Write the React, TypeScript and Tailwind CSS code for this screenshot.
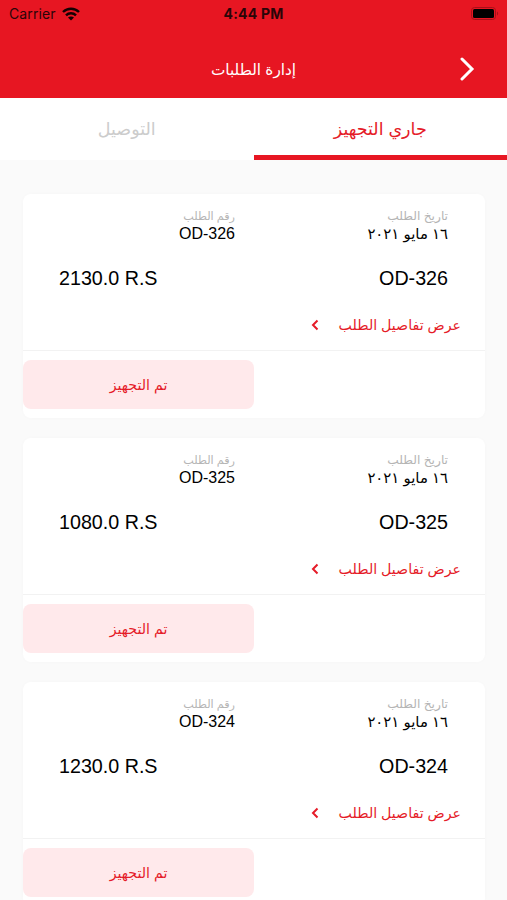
const ORDERS = [
  { id: "OD-326", date: "١٦ مايو ٢٠٢١", total: "2130.0 R.S" },
  { id: "OD-325", date: "١٦ مايو ٢٠٢١", total: "1080.0 R.S" },
  { id: "OD-324", date: "١٦ مايو ٢٠٢١", total: "1230.0 R.S" },
];

const StatusBar = () => {
  return (
    <div dir="ltr" className="grid h-[27px] grid-cols-3 items-center px-2 font-['Inter',sans-serif] text-[14px] text-[#2a0508]">
      <div className="flex items-center gap-1.5 pl-px">
        <span className="tracking-[0.1px]">Carrier</span>
        <svg width="18" height="14" viewBox="0 0 18 14" fill="none" stroke="#150102" strokeWidth="2.4">
          <path d="M1 5C5.5 0.600 12.500 0.600 17 5" />
          <path d="M4 8.400C6.800 5.600 11.200 5.600 14 8.400" />
          <path d="M6 10.600 9 13.600l3-3C10.400 9.200 7.600 9.200 6 10.600z" fill="#150102" stroke="none" />
        </svg>
      </div>
      <div className="text-center text-[14px] font-bold tracking-[0.2px]">4:44 PM</div>
      <div className="flex justify-end">
        <svg width="28" height="13" viewBox="0 0 28 13">
          <rect x="0.500" y="0.500" width="24" height="12" rx="3" fill="none" stroke="#a81019" />
          <rect x="2" y="2" width="21" height="9" rx="1.500" fill="#000" />
          <path d="M26 4.500c1.500 0.600 1.500 3.400 0 4z" fill="#a81019" />
        </svg>
      </div>
    </div>
  );
};

const OrderCard = ({ id, date, total }: { id: string; date: string; total: string }) => {
  return (
    <div className="h-[224px] rounded-lg bg-white shadow-[0_0_4px_rgba(0,0,0,0.02)]">
      <div className="h-[157px] border-b border-[#f2f2f2]">
        <div className="grid grid-cols-2 pt-[13px]">
          <div className="pr-[37px]">
            <p className="text-[12.2px] leading-[18px] text-[#b5b5b5]">تاريخ الطلب</p>
            <p className="text-[14.9px] leading-[18px]">{date}</p>
          </div>
          <div className="pr-[19px]">
            <p className="text-[11.2px] leading-[18px] text-[#b5b5b5]">رقم الطلب</p>
            <p className="text-[16px] leading-[18px]">{id}</p>
          </div>
        </div>
        <div className="mt-[23px] flex justify-between pr-[37px] pl-[36px] text-[19.7px] leading-6">
          <span>{id}</span>
          <span dir="ltr">{total}</span>
        </div>
        <a className="mt-[23px] flex items-center gap-[20px] pr-6 text-[14.2px] leading-6 text-[#e51b28]">
          <span>عرض تفاصيل الطلب</span>
          <svg width="8" height="12" viewBox="0 0 8 12" fill="none" stroke="currentColor" strokeWidth="2">
            <path d="M6.500 1.500 2 6l4.500 4.500" />
          </svg>
        </a>
      </div>
      <div className="mt-[9px] flex justify-end">
        <button className="h-[49px] w-[231px] rounded-lg bg-[#ffe9eb] pt-0.5 text-[14.2px] text-[#e51b28]">تم التجهيز</button>
      </div>
    </div>
  );
};

const App = () => {
  return (
    <div dir="rtl" className="h-[900px] overflow-hidden bg-[#fafafa] font-['Liberation_Sans','DejaVu_Sans',sans-serif] text-black">
      <header className="h-[98px] bg-[#e71622]">
        <StatusBar />
        <div className="grid h-[84px] grid-cols-3 items-center px-8 text-white">
          <svg width="16" height="24" viewBox="0 0 16 24" fill="none" stroke="currentColor" strokeWidth="3" strokeLinecap="round">
            <path d="m3 2 10 10L3 22" />
          </svg>
          <h1 className="pt-0.5 text-center text-[15.3px]">إدارة الطلبات</h1>
        </div>
      </header>
      <nav className="grid h-[62px] grid-cols-2 bg-white text-[17.5px]">
        <button className="border-b-[5px] border-[#e71622] pt-[6px] text-[#e51b28]">جاري التجهيز</button>
        <button className="border-b-[5px] border-white pt-[6px] text-[#cccccc]">التوصيل</button>
      </nav>
      <main className="flex flex-col gap-5 pt-[34px] pr-[22px] pl-[23px]">
        {ORDERS.map((order) => (
          <OrderCard key={order.id} {...order} />
        ))}
      </main>
    </div>
  );
};

export default App;
